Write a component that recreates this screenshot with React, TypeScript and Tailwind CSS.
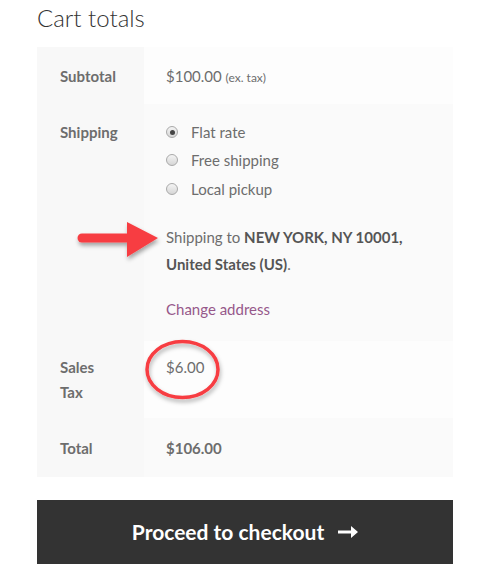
import React from "react";

function Radio({ checked }: { checked?: boolean }) {
  return (
    <span className="relative inline-flex h-[12px] w-[12px] items-center justify-center rounded-full border border-[#a9a9a9] bg-gradient-to-b from-[#f4f4f4] to-[#d6d6d6]">
      {checked && <span className="h-[5px] w-[5px] rounded-full bg-[#444]" />}
    </span>
  );
}

export default function App() {
  const font = { fontFamily: "Lato, 'Open Sans', sans-serif" };
  return (
    <div className="relative min-h-[586px] w-[488px] bg-white text-[15px] text-[#6d6d6d]" style={font}>
      <div className="px-[37px]">
        <h2 className="h-[47px] pt-[2px] text-[24px] font-light leading-[32px] text-[#333]">Cart totals</h2>

        <div className="grid w-[416px] grid-cols-[107px_1fr]">
          {/* Subtotal */}
          <div className="h-[57px] bg-[#f8f8f8] pl-[23px] pt-[16px] font-bold leading-[26px]">Subtotal</div>
          <div className="h-[57px] bg-[#fdfdfd] pl-[22px] pt-[16px] leading-[26px]">
            $100.00 <span className="text-[12px] leading-none">(ex. tax)</span>
          </div>

          {/* Shipping */}
          <div className="bg-[#f8f8f8] pl-[23px] pt-[15px] font-bold leading-[26px]">Shipping</div>
          <div className="h-[237px] bg-[#fafafa] pl-[22px] pt-[14px]">
            <ul>
              <li className="flex h-[28px] items-center gap-[13px]"><Radio checked />Flat rate</li>
              <li className="flex h-[28.5px] items-center gap-[13px]"><Radio />Free shipping</li>
              <li className="flex h-[29px] items-center gap-[13px]"><Radio />Local pickup</li>
            </ul>
            <p className="mt-[20px] leading-[27px]">
              Shipping to <strong className="text-[#555]">NEW YORK, NY 10001,</strong>
              <br />
              <strong className="text-[#555]">United States (US)</strong>.
            </p>
            <p className="mt-[18px] leading-[27px] text-[#96588a]">Change address</p>
          </div>

          {/* Sales Tax */}
          <div className="h-[77px] bg-[#f8f8f8] pl-[23px] pt-[13.5px] font-bold leading-[25px]">
            Sales
            <br />
            Tax
          </div>
          <div className="h-[77px] bg-[#fdfdfd] pl-[22px] pt-[13.5px] leading-[25px]">$6.00</div>

          {/* Total */}
          <div className="h-[59px] bg-[#f8f8f8] pl-[23px] pt-[17px] font-bold leading-[26px]">Total</div>
          <div className="h-[59px] bg-[#fafafa] pl-[22px] pt-[17px] font-bold leading-[26px]">$106.00</div>
        </div>

        <button className="mt-[23px] flex h-[64px] w-[416px] items-center justify-center gap-[14px] bg-[#333] text-[21px] font-bold text-white">
          Proceed to checkout
          <svg width="20" height="12" viewBox="0 0 20 12">
            <path d="M0 4.5h13V0l7 6-7 6V7.5H0z" fill="white" />
          </svg>
        </button>
      </div>

      {/* Annotation: arrow */}
      <svg className="pointer-events-none absolute left-[70px] top-[215px]" width="100" height="52" viewBox="0 0 100 52">
        <defs>
          <filter id="sh" x="-20%" y="-30%" width="140%" height="160%">
            <feDropShadow dx="1" dy="3" stdDeviation="2" floodColor="#000" floodOpacity="0.35" />
          </filter>
        </defs>
        <g filter="url(#sh)">
          <line x1="12" y1="23" x2="60" y2="23" stroke="#f73d42" strokeWidth="9" strokeLinecap="round" />
          <polygon points="57,7 88,23 57,42" fill="#f73d42" />
        </g>
      </svg>

      {/* Annotation: ellipse */}
      <svg className="pointer-events-none absolute left-[138px] top-[335px]" width="96" height="80" viewBox="0 0 96 80">
        <defs>
          <filter id="sh2" x="-20%" y="-20%" width="140%" height="150%">
            <feDropShadow dx="1" dy="3" stdDeviation="2" floodColor="#000" floodOpacity="0.3" />
          </filter>
        </defs>
        <ellipse cx="44.5" cy="34.5" rx="35.5" ry="28" fill="none" stroke="#f73d42" strokeWidth="3.5" filter="url(#sh2)" />
      </svg>
    </div>
  );
}
